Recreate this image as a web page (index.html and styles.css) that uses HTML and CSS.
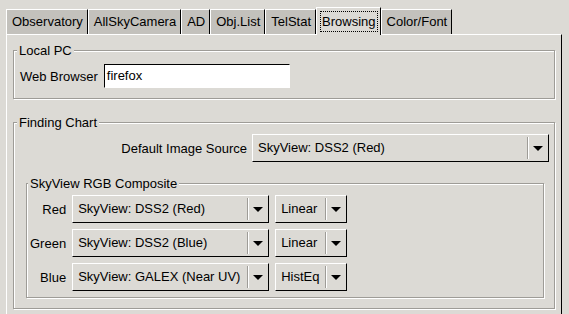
FILE: index.html
```html
<!DOCTYPE html>
<html>
	<head>
		<meta charset="UTF-8">
		<title>Settings</title>
		<link rel="stylesheet" href="styles.css">
	</head>
	<body>
		<div class="tabs">
			<div class="tab">Observatory</div>
			<div class="tab">AllSkyCamera</div>
			<div class="tab">AD</div>
			<div class="tab">Obj.List</div>
			<div class="tab">TelStat</div>
			<div class="tab active"><span class="focus">Browsing</span></div>
			<div class="tab">Color/Font</div>
		</div>
		<div class="page">
			<fieldset class="group local">
				<legend>Local PC</legend>
				<div class="field">
					<label>Web Browser</label>
					<div class="entry">firefox</div>
				</div>
			</fieldset>
			<fieldset class="group chart">
				<legend>Finding Chart</legend>
				<div class="source">
					<span>Default Image Source</span>
					<div class="combo wide"><span class="value">SkyView: DSS2 (Red)</span><span class="drop"></span></div>
				</div>
				<fieldset class="group rgb">
					<legend>SkyView RGB Composite</legend>
					<div class="channels">
						<span class="name">Red</span>
						<div class="combo"><span class="value">SkyView: DSS2 (Red)</span><span class="drop"></span></div>
						<div class="combo"><span class="value">Linear</span><span class="drop"></span></div>

						<span class="name">Green</span>
						<div class="combo"><span class="value">SkyView: DSS2 (Blue)</span><span class="drop"></span></div>
						<div class="combo"><span class="value">Linear</span><span class="drop"></span></div>

						<span class="name">Blue</span>
						<div class="combo"><span class="value">SkyView: GALEX (Near UV)</span><span class="drop"></span></div>
						<div class="combo"><span class="value">HistEq</span><span class="drop"></span></div>
					</div>
				</fieldset>
			</fieldset>
		</div>
	</body>
</html>
```

FILE: styles.css
```css
body{
	margin: 0;
	padding: 7px 0 0 6px;
	height: 314px;
	box-sizing: border-box;
	overflow: hidden;
	background: #dcdad5;
	color: #000;
	font: 13px "Liberation Sans", Arial, sans-serif;
}

/* notebook tabs */
.tabs{
	display: flex;
	align-items: flex-end;
}
.tab{
	height: 25px;
	box-sizing: border-box;
	padding: 0 4px 0 5px;
	border-top: 1px solid #fff;
	border-left: 1px solid #fff;
	border-right: 1px solid #000;
	background: #c3c1bc;
	line-height: 24px;
	white-space: nowrap;
}
.tab.active{
	height: 28px;
	margin-bottom: -1px;
	padding: 3px 2px 0 3px;
	background: #dcdad5;
	position: relative;
	z-index: 1;
}
.focus{
	display: block;
	border: 1px dotted #000;
	padding: 0 1px;
	line-height: 19px;
}

.page{
	width: 556px;
	height: 280px;
	box-sizing: border-box;
	border: 1px solid;
	border-color: #fff #000 #000 #fff;
	border-bottom: 0;
	padding: 8px 6px 0;
}

/* etched frames */
.group{
	margin: 0;
	border: 1px solid #9e9c97;
	box-shadow: inset 1px 1px 0 #fff, 1px 1px 0 #fff;
	min-width: 0;
}
.group legend{
	padding: 0 2px;
	line-height: 15px;
	background: #dcdad5;
}
.local{
	padding: 6px 6px 10px;
}
.local legend{
	margin-left: -3px;
}
.chart{
	margin-top: 16px;
	padding: 4px 5px 10px 12px;
}
.chart > legend{
	margin-left: -9px;
}
.rgb{
	margin: 14px 5px 0 0;
	padding: 4px 0 6px 3px;
}
.rgb legend{
	margin-left: -2px;
}

.field{
	display: flex;
	align-items: center;
	gap: 6px;
}
.entry{
	width: 186px;
	height: 24px;
	box-sizing: border-box;
	padding: 0 2px;
	background: #fff;
	border: 1px solid;
	border-color: #000 #fff #fff #000;
	line-height: 22px;
}

.source{
	display: flex;
	justify-content: flex-end;
	align-items: center;
	gap: 5px;
}
.channels{
	display: grid;
	grid-template-columns: auto 197px 72px;
	justify-content: start;
	gap: 6px;
	align-items: center;
}
.name{
	justify-self: end;
}

/* option menus */
.combo{
	display: flex;
	height: 28px;
	box-sizing: border-box;
	border: 1px solid;
	border-color: #fff #000 #000 #fff;
}
.combo.wide{
	width: 297px;
}
.combo .value{
	flex: 1;
	padding-left: 5px;
	line-height: 26px;
	white-space: nowrap;
	overflow: hidden;
}
.drop{
	width: 21px;
	margin: 2px 0;
	padding-left: 5px;
	box-sizing: border-box;
	border-left: 1px solid #9e9c97;
	box-shadow: inset 1px 0 0 #fff;
	display: flex;
	align-items: center;
}
.drop::after{
	content: "";
	border-left: 5px solid transparent;
	border-right: 5px solid transparent;
	border-top: 5px solid #000;
}
```
